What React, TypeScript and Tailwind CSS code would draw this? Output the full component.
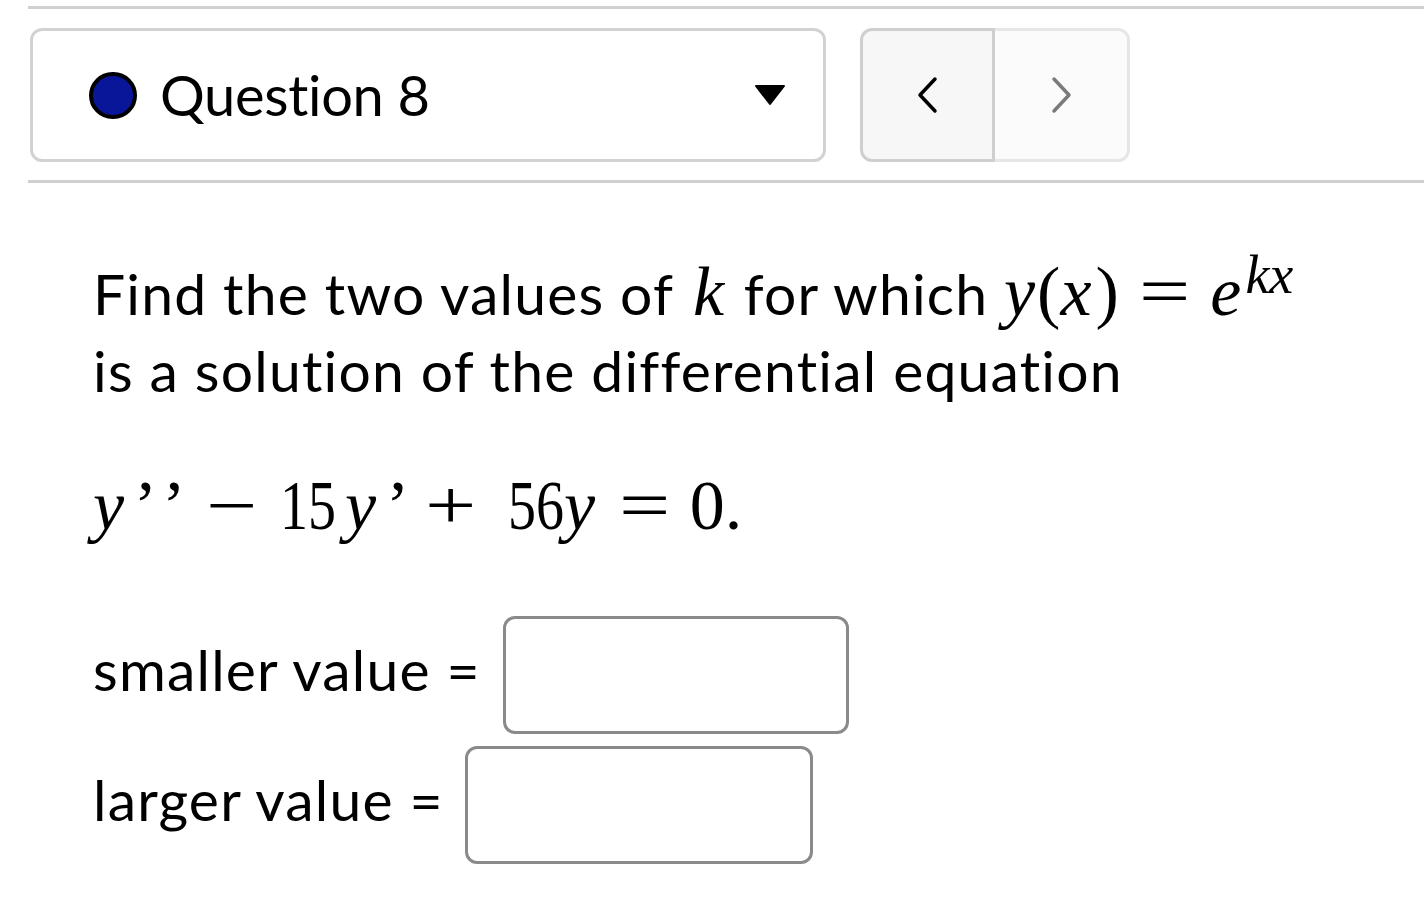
import React from 'react';

const sans = "font-['Lato','Open_Sans',sans-serif] [font-variant-ligatures:none]";

const M: React.FC<{ children: React.ReactNode; i?: boolean; className?: string }> = ({ children, i, className }) => (
  <span className={`font-['Liberation_Serif','DejaVu_Serif',serif] tracking-normal ${i ? 'italic' : ''} ${className ?? ''}`}>
    {children}
  </span>
);

// fixed-width math token, glyph centred inside
const T: React.FC<{ w: string; children: React.ReactNode; i?: boolean; op?: boolean; num?: boolean; left?: boolean }> = ({
  w,
  children,
  i,
  op,
  num,
  left,
}) => (
  <span className={`inline-block ${w} ${left ? 'text-left' : 'text-center'}`}>
    <M i={i} className={op ? 'inline-block scale-x-[1.3]' : num ? 'inline-block scale-x-[0.8]' : ''}>
      {children}
    </M>
  </span>
);

const App: React.FC = () => {
  return (
    <div className={`min-h-screen bg-white text-black ${sans}`}>
      <div className="pl-[28px] pt-[6px]">
        {/* top rule */}
        <div className="border-t-[3px] border-[#d0d0d0]" />

        {/* question picker + nav */}
        <div className="flex items-stretch gap-[34px] pl-[2px] pt-[19px] pb-[18px]">
          <div className="flex w-[796px] h-[134px] items-center rounded-[12px] border-[3px] border-[#d2d2d2] pl-[56px] pr-[38px]">
            <div className="w-[48px] h-[47px] rounded-full bg-[#0a169a] border-[4px] border-black" />
            <span className="ml-[23px] text-[56px] leading-none tracking-[-0.3px]">Question 8</span>
            <svg className="ml-auto" width="30" height="22" viewBox="0 0 30 22">
              <path d="M1 2 L29 2 L15 20 Z" fill="#000" stroke="#000" strokeWidth="2" strokeLinejoin="round" />
            </svg>
          </div>

          <div className="flex h-[134px] w-[270px]">
            <button className="flex w-[135px] items-center justify-center rounded-l-[12px] border-[3px] border-[#cfcfcf] bg-[#f7f7f7]">
              <svg width="26" height="38" viewBox="0 0 26 38">
                <path d="M20 3 L5 19 L20 35" fill="none" stroke="#000" strokeWidth="3.5" strokeLinecap="round" strokeLinejoin="round" />
              </svg>
            </button>
            <button className="flex w-[135px] items-center justify-center rounded-r-[12px] border-[3px] border-l-0 border-[#e6e6e6] bg-[#fbfbfb]">
              <svg width="26" height="38" viewBox="0 0 26 38">
                <path d="M6 3 L21 19 L6 35" fill="none" stroke="#7a7a7a" strokeWidth="3.5" strokeLinecap="round" strokeLinejoin="round" />
              </svg>
            </button>
          </div>
        </div>

        {/* bottom rule */}
        <div className="border-t-[3px] border-[#d0d0d0]" />

        {/* problem body */}
        <div className="pl-[65px] tracking-[1.2px]">
          <p className="mt-[72px] w-[1300px] text-[57px] leading-[77px]">
            Find the two values of{' '}
            <span className="text-[70px] leading-[0]">
              <M i className="mx-[4px]">k</M>
            </span>{' '}
            for which{' '}
            <span className="text-[70px] leading-[0]">
              <M i>y</M>
              <M className="ml-[2px]">(</M>
              <M i>x</M>
              <M className="ml-[4px]">)</M>
              <M className="mx-[26px] inline-block scale-x-[1.3]">=</M>
              <M i>e</M>
              <M i className="ml-[4px] text-[54px] tracking-[2px] align-[22px]">kx</M>
            </span>
            <br />
            is a solution of the differential equation
          </p>

          <div className="mt-[55px] text-[70px] leading-[77px] whitespace-nowrap">
            <T w="w-[40px]" i left>y</T>
            <T w="w-[25px]">’</T>
            <T w="w-[32px]">’</T>
            <T w="w-[83px]" op>−</T>
            <T w="w-[62px]" num>15</T>
            <T w="w-[51px]" i>y</T>
            <T w="w-[14px]">’</T>
            <T w="w-[101px]" op>+</T>
            <T w="w-[54px]" num>56</T>
            <T w="w-[49px]" i>y</T>
            <T w="w-[82px]" op>=</T>
            <T w="w-[60px]">0.</T>
          </div>

          <div className="mt-[72px] flex flex-col gap-[12px] text-[57px]">
            <div className="flex items-center">
              <span className="pb-[11px] leading-[77px]">smaller value =</span>
              <input
                type="text"
                className="ml-[22px] h-[118px] w-[346px] rounded-[12px] border-[3px] border-[#8a8a8a] bg-white outline-none"
              />
            </div>
            <div className="flex items-center">
              <span className="pb-[11px] leading-[77px]">larger value =</span>
              <input
                type="text"
                className="ml-[21px] h-[118px] w-[348px] rounded-[12px] border-[3px] border-[#8a8a8a] bg-white outline-none"
              />
            </div>
          </div>
        </div>
      </div>
    </div>
  );
};

export default App;
